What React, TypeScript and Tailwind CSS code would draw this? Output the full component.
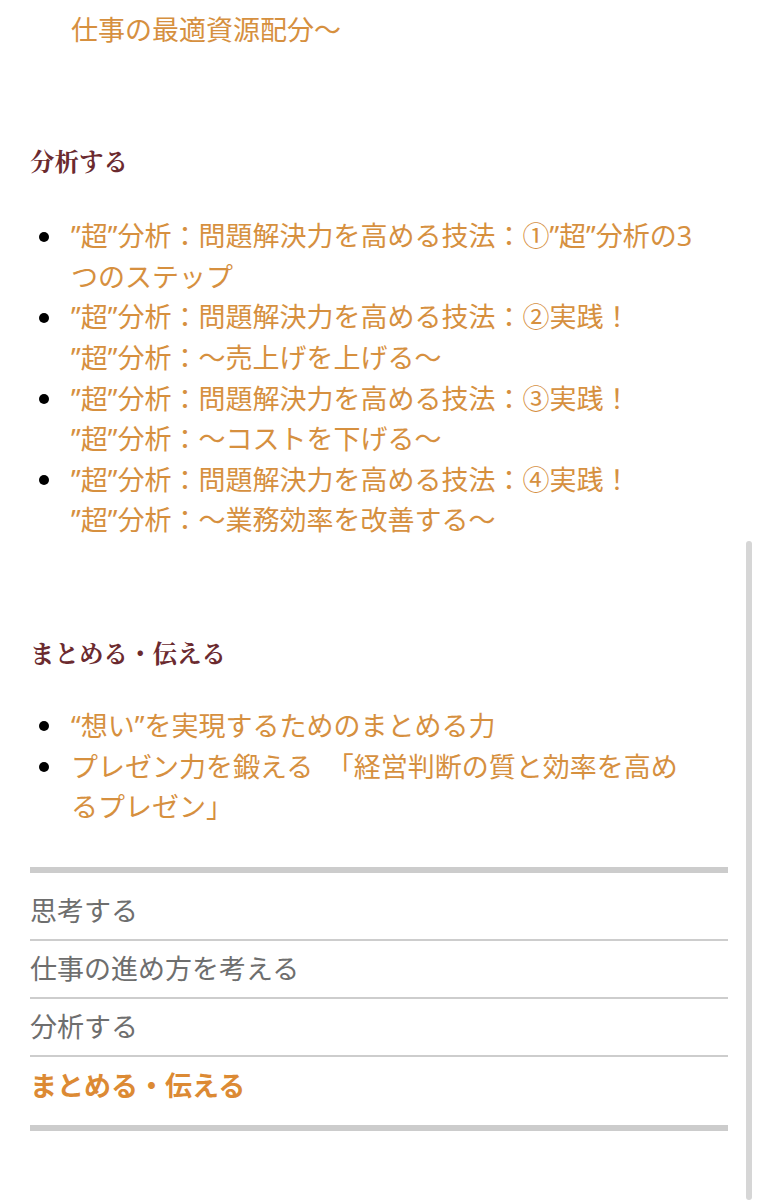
import React from 'react';

type Item = { lines: string[] };

const sans = { fontFamily: '"Noto Sans", "Noto Sans CJK JP", sans-serif' };

const analyze: Item[] = [
  { lines: ['”超”分析：問題解決力を高める技法：①”超”分析の3', 'つのステップ'] },
  { lines: ['”超”分析：問題解決力を高める技法：②実践！', '”超”分析：〜売上げを上げる〜'] },
  { lines: ['”超”分析：問題解決力を高める技法：③実践！', '”超”分析：〜コストを下げる〜'] },
  { lines: ['”超”分析：問題解決力を高める技法：④実践！', '”超”分析：〜業務効率を改善する〜'] },
];

const summarize: Item[] = [
  { lines: ['“想い”を実現するためのまとめる力'] },
  { lines: ['プレゼン力を鍛える　「経営判断の質と効率を高め', 'るプレゼン」'] },
];

const navItems = ['思考する', '仕事の進め方を考える', '分析する', 'まとめる・伝える'];

const LinkList: React.FC<{ items: Item[]; className?: string }> = ({ items, className }) => (
  <ul className={className}>
    {items.map((item, i) => (
      <li key={i} className="flex">
        <div className="w-[41px] h-[40.6px] flex items-center shrink-0">
          <span className="ml-[9px] w-[10px] h-[10px] rounded-full bg-black" />
        </div>
        <a className="text-[27px] leading-[40.6px] text-[#d6903f] whitespace-nowrap" style={sans}>
          {item.lines.map((l, j) => (
            <div key={j}>{l}</div>
          ))}
        </a>
      </li>
    ))}
  </ul>
);

const Heading: React.FC<{ children: React.ReactNode; className?: string }> = ({ children, className }) => (
  <h3
    className={`text-[24.5px] leading-[36px] font-bold text-[#6b2a2f] ${className ?? ''}`}
    style={{ fontFamily: '"Noto Serif CJK JP", "Noto Sans CJK JP", serif' }}
  >
    {children}
  </h3>
);

export default function App() {
  return (
    <div className="relative h-[1200px] overflow-hidden bg-white px-[30px]">
      <div className="pt-[9.7px]">
        {/* tail of the previous section's last link, scrolled off the top */}
        <a className="block pl-[41px] text-[27px] leading-[40.6px] text-[#d6903f]" style={sans}>
          仕事の最適資源配分〜
        </a>

        <Heading className="mt-[93px]">分析する</Heading>
        <LinkList items={analyze} className="mt-[37px]" />

        <Heading className="mt-[94px]">まとめる・伝える</Heading>
        <LinkList items={summarize} className="mt-[35px]" />

        <nav className="mt-[39px] border-y-[6px] border-[#cccccc] py-[10px]" style={sans}>
          {navItems.map((label, i) => {
            const active = i === navItems.length - 1;
            return (
              <div
                key={label}
                className={`h-[58px] flex items-center text-[27px] ${
                  active ? 'font-bold text-[#dc8a34]' : 'text-[#6e6e6e] border-b-2 border-[#cdcdcd]'
                }`}
              >
                {label}
              </div>
            );
          })}
        </nav>
      </div>

      <div className="absolute right-[6px] top-[541px] bottom-0 w-[6px] rounded-full bg-[#d6d6d6]" />
    </div>
  );
}
